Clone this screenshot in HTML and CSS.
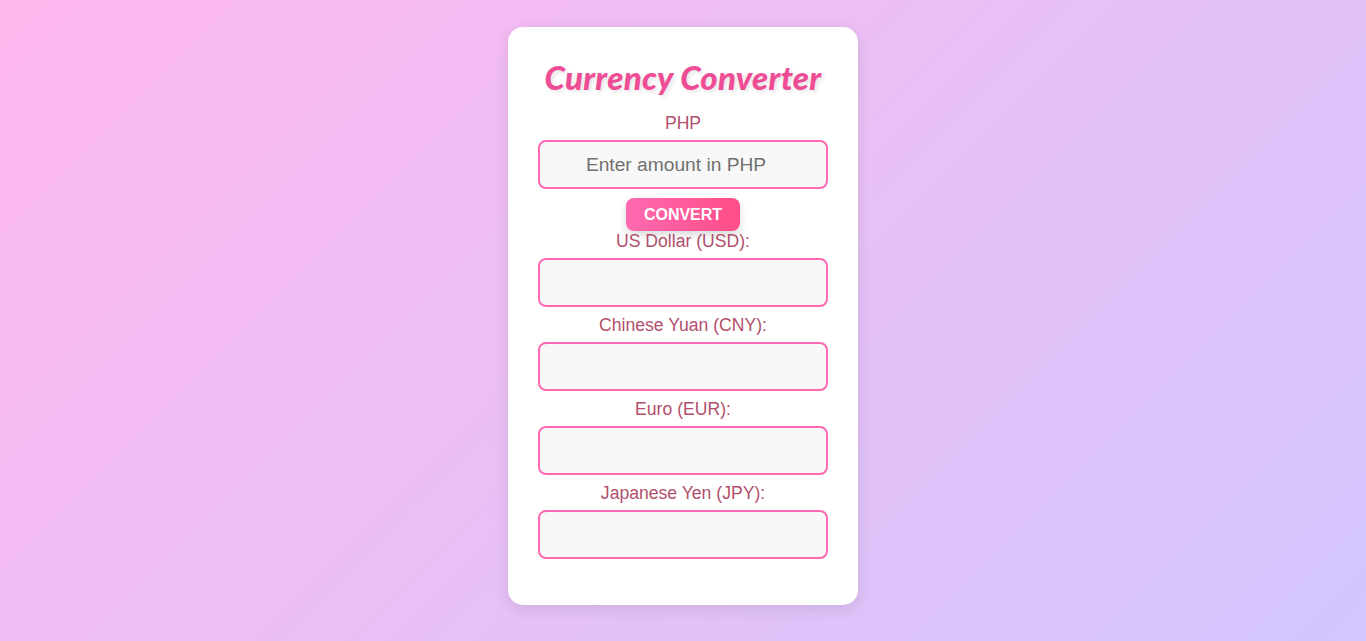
FILE: index.html
```html
<!DOCTYPE html>
<html lang="en">
<head>
<meta charset="utf-8">
<title>Currency Converter</title>
<link rel="stylesheet" href="styles.css">
</head>
<body>
  <main class="card">
    <h1 class="title">Currency Converter</h1>
    <label class="label" for="php">PHP</label>
    <input class="field field-main" id="php" type="text" placeholder="Enter amount in PHP">
    <button class="btn" type="button">CONVERT</button>
    <label class="label" for="usd">US Dollar (USD):</label>
    <input class="field" id="usd" type="text" readonly>
    <label class="label" for="cny">Chinese Yuan (CNY):</label>
    <input class="field" id="cny" type="text" readonly>
    <label class="label" for="eur">Euro (EUR):</label>
    <input class="field" id="eur" type="text" readonly>
    <label class="label" for="jpy">Japanese Yen (JPY):</label>
    <input class="field" id="jpy" type="text" readonly>
  </main>
</body>
</html>
```
FILE: styles.css
```css
html, body {
  margin: 0;
  height: 100%;
}
body {
  background: linear-gradient(135deg, #ffb9ef 0%, #d2c6fd 100%);
  font-family: "Liberation Sans", Arial, sans-serif;
  display: flex;
  flex-direction: column;
  align-items: center;
  padding-top: 27px;
  box-sizing: border-box;
}
.card {
  width: 350px;
  box-sizing: border-box;
  background: #ffffff;
  border-radius: 15px;
  padding: 30px 30px 38px;
  box-shadow: 0 4px 15px rgba(0, 0, 0, 0.1);
  display: flex;
  flex-direction: column;
  align-items: center;
}
.title {
  margin: 0 0 16px;
  font-family: Lato, "Noto Sans", sans-serif;
  font-style: italic;
  font-weight: 900;
  font-size: 33px;
  letter-spacing: 0.3px;
  line-height: 40px;
  color: #ee4d95;
  text-shadow: 2px 2px 4px rgba(0, 0, 0, 0.12);
}
.label {
  display: block;
  font-size: 17.6px;
  line-height: 21px;
  color: #b14f6c;
  margin: 0 0 6px;
  text-align: center;
}
.field {
  width: 100%;
  height: 49px;
  box-sizing: border-box;
  border: 2px solid #ff69b4;
  border-radius: 8px;
  background: #f8f8f8;
  font-family: "Liberation Sans", Arial, sans-serif;
  font-size: 19.2px;
  color: #333;
  padding: 0 24px 0 10px;
  text-align: center;
  margin: 0 0 8px;
  outline: none;
}
.field::placeholder {
  color: #707070;
}
.field-main {
  margin-bottom: 9px;
}
.btn {
  height: 33px;
  padding: 0 18px;
  border: none;
  border-radius: 8px;
  background: linear-gradient(90deg, #ff69b0, #ff4d88);
  color: #ffffff;
  font-family: "Liberation Sans", Arial, sans-serif;
  font-weight: 700;
  font-size: 16px;
  box-shadow: 0 4px 8px rgba(0, 0, 0, 0.15);
  cursor: pointer;
}
```
